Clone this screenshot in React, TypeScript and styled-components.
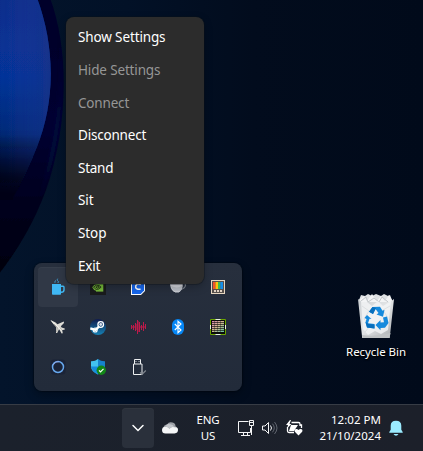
import React from "react";
import styled, { createGlobalStyle } from "styled-components";

const GlobalStyle = createGlobalStyle`
  *, *::before, *::after { box-sizing: border-box; }
  html, body { margin: 0; padding: 0; overflow: hidden; background: #020a19; }
`;

const Screen = styled.div`
  position: relative;
  display: flex;
  flex-direction: column;
  width: 423px;
  height: 451px;
  overflow: hidden;
  color: #fff;
  font-family: "Noto Sans", "Open Sans", sans-serif;
  background: linear-gradient(90deg, #03142b 0%, #021127 30%, #020c1d 60%, #010a1a 100%);
`;

const Wallpaper = styled.svg`
  position: absolute;
  left: 0;
  top: 0;
`;

const Desktop = styled.main`
  position: relative;
  flex: 1;
  min-height: 0;
`;

const Shortcut = styled.div`
  position: absolute;
  left: 338px;
  top: 292px;
  width: 76px;
  display: flex;
  flex-direction: column;
  align-items: center;
`;

const ShortcutLabel = styled.span`
  margin-top: 4px;
  font-size: 11.5px;
  line-height: 16px;
  letter-spacing: -0.06px;
  white-space: nowrap;
  text-shadow: 0 1px 2px #000, 1px 1px 1px #000;
`;

const TrayFlyout = styled.section`
  position: absolute;
  left: 34px;
  top: 263px;
  display: grid;
  grid-template-columns: repeat(5, 40px);
  grid-auto-rows: 40px;
  padding: 4px;
  border-radius: 8px;
  background: linear-gradient(180deg, #272f3d, #222b3a);
  box-shadow: 0 0 1px 1px rgba(0, 0, 0, 0.25), 0 4px 10px rgba(0, 0, 0, 0.3);
`;

const TrayCell = styled.div<{ $active?: boolean }>`
  display: flex;
  align-items: center;
  justify-content: center;
  border-radius: 4px;
  background: ${(p) => (p.$active ? "#303846" : "transparent")};
  box-shadow: ${(p) => (p.$active ? "inset 0 1px 0 #363e4b" : "none")};
`;

const ContextMenu = styled.nav`
  position: absolute;
  left: 66px;
  top: 17px;
  width: 138px;
  height: 267px;
  padding: 4px 0 2px;
  display: flex;
  flex-direction: column;
  border-radius: 8px;
  background: #2c2c2c;
  box-shadow: 0 0 0 1px rgba(12, 16, 24, 0.35), 0 3px 8px rgba(0, 0, 0, 0.25);
`;

const MenuItem = styled.div<{ $disabled?: boolean; $spacing: number }>`
  flex: 1;
  display: flex;
  align-items: center;
  padding-left: 12px;
  font-size: 13.5px;
  line-height: 20px;
  letter-spacing: ${(p) => p.$spacing}px;
  white-space: nowrap;
  color: ${(p) => (p.$disabled ? "#969696" : "#fff")};
`;

const Taskbar = styled.footer`
  position: relative;
  height: 47px;
  display: flex;
  justify-content: flex-end;
  align-items: center;
  padding-right: 19px;
  border-top: 1px solid #373c45;
  background: linear-gradient(90deg, #1b212c, #1c202a);
`;

const ChevronButton = styled.div`
  width: 32px;
  height: 40px;
  display: flex;
  align-items: center;
  justify-content: center;
  border-radius: 4px;
  background: #2a303b;
  box-shadow: inset 0 1px 0 #30363f;
`;

const WeatherSlot = styled.div`
  width: 32px;
  display: flex;
  justify-content: center;
`;

const Language = styled.div`
  width: 44px;
  text-align: center;
  font-size: 11.5px;
  line-height: 16px;
  letter-spacing: -0.1px;
`;

const StatusIcons = styled.div`
  display: flex;
  gap: 8px;
  margin-left: 8px;
`;

const Clock = styled.div`
  width: 79px;
  text-align: right;
  font-size: 11.5px;
  line-height: 16px;
  letter-spacing: 0.03px;
  white-space: nowrap;
`;

const BellSlot = styled.div`
  width: 16px;
  height: 16px;
  margin-left: 7px;
`;

const Glyph = styled.svg`
  display: block;
  overflow: visible;
`;

const Icon = ({ children }: { children: React.ReactNode }) => (
  <Glyph width="16" height="16" viewBox="0 0 16 16" fill="none">
    {children}
  </Glyph>
);

const MugIcon = () => (
  <Icon>
    <path d="M2 5h9v10a.8.8 0 0 1-.8.8H2.8A.8.8 0 0 1 2 15z" fill="#3fb8f5" />
    <path d="M11 7.2h2q1 0 1 1v2.7q0 2.2-3 2.4" stroke="#3fb8f5" strokeWidth="1.4" />
    <path d="M5 3.7q-.8-1.3 1-2.2M7.8 4q1.7-1.2-.4-2.6Q7 .7 7.7-.3" stroke="#3fa7de" strokeWidth=".9" />
  </Icon>
);

const NvidiaIcon = () => (
  <Icon>
    <path d="M0 0h16v16H0z" fill="#191b1c" />
    <path d="M6 4h7.3v8.6H6z" fill="#76b93b" />
    <path d="M2.2 8.2Q5 4.2 9 5.4q2.4 1 3.2 2.8-2.4 3.7-6.2 3.5Q3.5 11 2.2 8.2z" fill="#76b93b" />
    <path d="M3.3 8.3q2.8-3.4 6-1.7l1.8 1.6Q8.5 11 6 10.3 4.5 9.6 4 8.3M5.8 8.2q2-2 3.7-.1-1.6 2-3.7.1" stroke="#203014" strokeWidth=".9" />
  </Icon>
);

const CIcon = () => (
  <Icon>
    <path d="M1 0h14v12l-4 4H1z" fill="#fff" />
    <path d="M2 1h12v10.6l-3.4 3.4H2z" fill="#1767ed" />
    <path d="M10.8 5.7Q7.2 3.8 5.7 6.8q-.8 3.8 4.9 3.5" stroke="#fff" strokeWidth="1.5" />
  </Icon>
);

const TeapotIcon = () => (
  <Icon>
    <path d="M10.5 10.500Q15.200 9.500 15.500 6q.1-1.700-1.800-1.700" stroke="#7d838d" strokeWidth="1.200" />
    <path d="M0 3h12.500q1 6-2.800 10H4Q-.2 10.300 0 3z" fill="#d2d4da" />
    <path d="M1 7q1 4 3.500 5.500h5q2.500-1.500 3-6-5 3.500-11.500.5z" fill="#b9bdc5" />
    <path d="M5 13h4v1H5z" fill="#777d88" />
  </Icon>
);

const PowerToysIcon = () => (
  <Icon>
    <path d="M1 1h14v14H1z" fill="#e6d6c0" />
    <path d="M2 2h12v12H2z" fill="#57504c" />
    <path d="M3 3h2.5v7H3z" fill="#f15329" />
    <path d="M5.5 3H8v7H5.500z" fill="#ffc20b" />
    <path d="M8 3h2.300v7H8z" fill="#37bd52" />
    <path d="M10.300 3H13v7h-2.700z" fill="#168ee8" />
    <path d="M4 11h2v2H4zM7 11h2v2H7zM10 11h2v2h-2z" fill="#e0d2c3" />
  </Icon>
);

const JetIcon = () => (
  <Icon>
    <path d="M.3 1 5.200 3.200 7.400 5.200 13.800 2.600 14 4 10.800 7.200 11.600 8.600 14.800 9.600 14.600 10.700 12.200 10.900 12.800 14.200 11.600 14.500 9.900 11.500 9 10.300 7.200 14 6 14 6.200 8.300 3.500 5.200z" fill="#dddcd6" />
    <path d="m1.500 2 10 9" stroke="#fbf9f2" strokeWidth=".8" />
    <path d="m4 5 3.500 3.800L6.700 13M10 8.500l1.600 2.300" stroke="#8e8f88" strokeWidth=".6" />
  </Icon>
);

const SteamIcon = () => (
  <Icon>
    <defs>
      <linearGradient id="steam" x1="0" y1="0" x2="0" y2="1">
        <stop stopColor="#101b4d" />
        <stop offset="1" stopColor="#1682b5" />
      </linearGradient>
    </defs>
    <circle cx="8" cy="8" r="8" fill="url(#steam)" />
    <path d="m.3 9.300 5.200 1.500L9 7.700" stroke="#fff" strokeWidth="2.400" />
    <circle cx="10.700" cy="5.500" r="2.800" stroke="#fff" strokeWidth="1.300" />
    <circle cx="10.700" cy="5.500" r="1.400" fill="#d7deea" />
    <circle cx="5.200" cy="11" r="2" stroke="#fff" strokeWidth="1.100" />
  </Icon>
);

const WaveIcon = () => (
  <Icon>
    <path d="M1.500 6v4M3.500 6v5M5.500 4v8M7.500 1v14M9.500 3v10M11.500 6v5M13.500 3v9M15.500 5v5" stroke="#be1a4b" />
    <path d="M6.500 5v6M8.500 2v11M4.500 7v2M10.500 7v2M12.500 7v2M14.500 7v2M2.500 7v2" stroke="#9c1c44" strokeOpacity=".7" />
  </Icon>
);

const BluetoothIcon = () => (
  <Icon>
    <rect x="2" width="12" height="16" rx="6" fill="#0586f5" />
    <path d="m4.800 5 6.200 6-3 2.700V2.300L11 5l-6.200 6" stroke="#fff" strokeWidth="1.100" />
  </Icon>
);

const SpectrumIcon = () => (
  <Icon>
    <defs>
      <linearGradient id="matrix" x1="0" y1="0" x2="1" y2="1">
        <stop stopColor="#dc87ac" />
        <stop offset=".5" stopColor="#d1ba92" />
        <stop offset="1" stopColor="#62c5a1" />
      </linearGradient>
    </defs>
    <path d="M.5.500h15v15H.5z" fill="#090b0b" stroke="#6ba300" />
    <path d="M5.500.500h5M5.500 15.500h5M.500 6v4M15.500 6v4" stroke="#e7eee2" />
    <path d="M2 2h12v11H2z" fill="url(#matrix)" opacity=".35" />
    <path d="M2 2h12v1H2zM2 4h12v1H2zM2 6h12v1H2zM2 8h12v1H2zM2 10h12v1H2zM2 12h12v1H2z" fill="url(#matrix)" />
    <path d="M4.500 2v11M7.500 2v11M10.500 2v11" stroke="#0b0d0d" strokeOpacity=".35" />
  </Icon>
);

const CortanaIcon = () => (
  <Icon>
    <rect x=".5" y=".5" width="15" height="15" rx="3.500" fill="#1b2337" />
    <circle cx="8" cy="8" r="5.500" stroke="#66a8ed" strokeWidth="1.500" />
    <path d="M3 6q2-4 6-3.300" stroke="#a1a4e5" strokeWidth=".7" />
  </Icon>
);

const DefenderIcon = () => (
  <Icon>
    <path d="M8 0Q5 2.400 1 2.200V7q0 5.500 7 8.500z" fill="#42c3f0" />
    <path d="M8 0q3 2.400 7 2.200V7q0 5.500-7 8.500z" fill="#1683cd" />
    <path d="M1 7.500h7v8Q2.300 13 1 7.500z" fill="#168ddd" />
    <circle cx="11.300" cy="11.300" r="4.700" fill="#128717" />
    <path d="m9 11.300 1.500 1.500 3-3" stroke="#fff" strokeWidth="1.200" />
  </Icon>
);

const UsbIcon = () => (
  <Icon>
    <path d="M4.500 5V.500h6V5M3.500 5h8.500v10.500H3.500V5" stroke="#eceef0" />
    <path d="M5.500 2.500h1M8.500 2.500h1" stroke="#c4c8cc" />
    <path d="m10 13.300 2 2 3.800-3.800" stroke="#7f858d" strokeWidth="1.200" />
  </Icon>
);

const RecycleBinIcon = () => (
  <Glyph width="40" height="48" viewBox="0 0 40 48" fill="none">
    <defs>
      <linearGradient id="bin" x1="0" y1="0" x2="1" y2="1">
        <stop stopColor="#cbcfd2" />
        <stop offset=".5" stopColor="#e3e5e7" />
        <stop offset="1" stopColor="#a6a9ac" />
      </linearGradient>
    </defs>
    <path d="m3 8 2-5 4 1 3-2 4 2 4-2 5 2 3-2 4 2 2-1 2 5-1 6H3z" fill="#dfe2e4" />
    <path d="m3 8 5-4 3 5 5-7 5 7 4-5 4 5 4-6 4 7-4 6-6-3-6 3-7-5-5 4z" fill="#f3f4f5" />
    <path d="m5 9 5-4 2 5 6-4 5 4 3-5 6 5" stroke="#c3c7ca" />
    <path d="m2 7 4.200 39h27.500L38 7l-4 3H6z" fill="url(#bin)" />
    <path d="m5 9 6 1 5 4 6-5 5 5 8-5-3 29-7 4-6-3-7 4-5-6z" fill="#f4f5f6" opacity=".8" />
    <path d="m6 14 7 5-5 8 6 7-5 6M34 14l-7 4 5 8-8 11" stroke="#dde0e2" />
    <path d="m6 43 1 3h26.500l1-5q-15 4-28.500 2z" fill="#bfc2c4" />
    <g fill="#168add">
      <path d="m16.500 15 7.500-.3 2.500 4 2-1-1.500 7-6.500-2.300 2-1.300-3-4-2.500 5-4-2.300z" />
      <path d="m11 23 4.500 4-2-.2-1.500 4.500 6.500.7v4.500l-7.500-1-1.500-5 1-3.500-2-1z" />
      <path d="m27 25.500 4-1 1.500 6.500-3.500 4.800-4.500.2v2.200l-5-5.200 5-5v2.600l3.500-.3z" />
    </g>
    <path d="m16.500 15 3.500 1-3 6-4-2.300zM9.500 30l3 2 6 .5v4l-7.500-1z" fill="#086fbd" />
  </Glyph>
);

const menuItems = [
  { label: "Show Settings", disabled: false, spacing: -0.13 },
  { label: "Hide Settings", disabled: true, spacing: -0.15 },
  { label: "Connect", disabled: true, spacing: -0.18 },
  { label: "Disconnect", disabled: false, spacing: -0.2 },
  { label: "Stand", disabled: false, spacing: -0.25 },
  { label: "Sit", disabled: false, spacing: -0.1 },
  { label: "Stop", disabled: false, spacing: -0.1 },
  { label: "Exit", disabled: false, spacing: -0.2 },
];

const trayIcons = [
  MugIcon, NvidiaIcon, CIcon, TeapotIcon, PowerToysIcon,
  JetIcon, SteamIcon, WaveIcon, BluetoothIcon, SpectrumIcon,
  CortanaIcon, DefenderIcon, UsbIcon,
];

export default function App() {
  return (
    <Screen>
      <GlobalStyle />
      <Wallpaper width="423" height="451" viewBox="0 0 423 451">
        <defs>
          <linearGradient id="petal" x1="0" y1="0" x2="0" y2="1">
            <stop stopColor="#092d89" />
            <stop offset=".4" stopColor="#063398" />
            <stop offset=".65" stopColor="#052a78" />
            <stop offset=".82" stopColor="#03174a" />
            <stop offset="1" stopColor="#010314" />
          </linearGradient>
          <linearGradient id="petalEdge" x1="0" y1="0" x2="0" y2="1">
            <stop stopColor="#010229" />
            <stop offset=".48" stopColor="#010231" />
            <stop offset=".78" stopColor="#01021a" />
            <stop offset="1" stopColor="#01030d" />
          </linearGradient>
          <linearGradient id="sheen">
            <stop stopColor="#1938a0" stopOpacity="0" />
            <stop offset=".75" stopColor="#17348f" stopOpacity=".5" />
            <stop offset="1" stopColor="#1c3285" stopOpacity=".75" />
          </linearGradient>
          <linearGradient id="fade" x1="0" y1="0" x2="0" y2="1">
            <stop offset=".68" stopColor="#010317" stopOpacity="0" />
            <stop offset=".97" stopColor="#010314" />
          </linearGradient>
          <linearGradient id="rim" x1="0" y1="0" x2="0" y2="1">
            <stop stopColor="#040d3a" stopOpacity="0" />
            <stop offset=".7" stopColor="#050f3c" stopOpacity=".8" />
            <stop offset="1" stopColor="#040d30" stopOpacity="0" />
          </linearGradient>
          <filter id="soft"><feGaussianBlur stdDeviation=".7" /></filter>
          <filter id="softer" x="-50%" width="200%"><feGaussianBlur stdDeviation="1.500" /></filter>
        </defs>
        <path d="M-5-5H49C70 49 68 128 46 190Q29 237-5 279z" fill="url(#petalEdge)" filter="url(#soft)" />
        <path d="M60 40q6 78-20 160" stroke="url(#rim)" strokeWidth="4" fill="none" filter="url(#softer)" />
        <path d="M-5-5H36C56 47 55 102 37 147Q26 175 12 199H-5z" fill="url(#petal)" filter="url(#soft)" />
        <path d="M-5-5H36C56 47 55 102 37 147Q26 175 12 199H-5z" fill="url(#sheen)" filter="url(#soft)" />
        <path d="M-5-5H36C56 47 55 102 37 147Q26 175 12 200H-5z" fill="url(#fade)" filter="url(#soft)" />
      </Wallpaper>

      <Desktop>
        <Shortcut>
          <RecycleBinIcon />
          <ShortcutLabel>Recycle Bin</ShortcutLabel>
        </Shortcut>
        <TrayFlyout>
          {trayIcons.map((TrayIcon, index) => (
            <TrayCell key={index} $active={index === 0}>
              <TrayIcon />
            </TrayCell>
          ))}
        </TrayFlyout>
        <ContextMenu>
          {menuItems.map((item) => (
            <MenuItem key={item.label} $disabled={item.disabled} $spacing={item.spacing}>
              {item.label}
            </MenuItem>
          ))}
        </ContextMenu>
      </Desktop>

      <Taskbar>
        <ChevronButton>
          <Icon><path d="m3 5.500 5 5 5-5" stroke="#fff" strokeWidth="1.500" strokeLinecap="round" /></Icon>
        </ChevronButton>
        <WeatherSlot>
          <Icon>
            <path d="M2 9q-1.500-4 3-4.500 2-3.300 5.500-2 3 .7 3 3.700 2.500 1 2.200 4z" fill="#9b9fa5" />
            <path d="M0 10q0-3.200 3.500-3.300 2.500 0 4 2 2-2.400 5-1.400Q16 7 16 10q0 3-3.500 3.500h-9Q0 13.500 0 10z" fill="#f5f6f7" />
            <path d="M3.500 6.500q1-3 4.500-2.300Q11 4 12.500 7 9.500 6.200 7.500 8.700q-1.500-2-4-2.200z" fill="#c2c5ca" />
          </Icon>
        </WeatherSlot>
        <Language>ENG<br />US</Language>
        <StatusIcons>
          <Icon>
            <path d="M10.500 1.500H.500v11h12V8M3 15.500h9M5.500 13v2.500M9.500 13v2.500" stroke="#f3f4f5" />
            <path d="M11.500.500h4v5h-4zM13.500 5.500V15M12 2.500h3" stroke="#f3f4f5" />
          </Icon>
          <Icon>
            <path d="M.500 6H3l3.500-3.500v11L3 10H.500z" stroke="#f3f4f5" strokeLinejoin="round" />
            <path d="M8.500 5.500q2 2.500 0 5" stroke="#f3f4f5" />
            <path d="M10.500 3.700q3.500 4.300 0 8.600M12.500 2q5 6 0 12" stroke="#60656f" />
          </Icon>
          <Icon>
            <path d="M5.500 2.500h7q1.500 0 1.500 1.500v2M1.500 7v4q0 1.500 1.500 1.500h5M14 5h1.500v3" stroke="#fff" strokeWidth="1.300" />
            <path d="M5 5h7L8 11H3z" fill="#fff" />
            <path d="M4 0 0 5h2L1 8.500 5.500 4h-2L5 0zM12.500 15.500l-3.700-3.700q-1-2 1-2.700 1.500-.5 2.700 1 1.200-1.500 2.700-1 2 .7 1 2.700z" fill="#fff" />
          </Icon>
        </StatusIcons>
        <Clock>12:02 PM<br />21/10/2024</Clock>
        <BellSlot>
          <Icon>
            <path d="M8 .700q5.300 0 5.300 5v4L14.700 12v.7H1.300V12l1.400-2.300v-4q0-5 5.300-5zM5.500 14h5Q9.500 15.800 8 15.800T5.500 14z" fill="#9bebff" />
          </Icon>
        </BellSlot>
      </Taskbar>
    </Screen>
  );
}
